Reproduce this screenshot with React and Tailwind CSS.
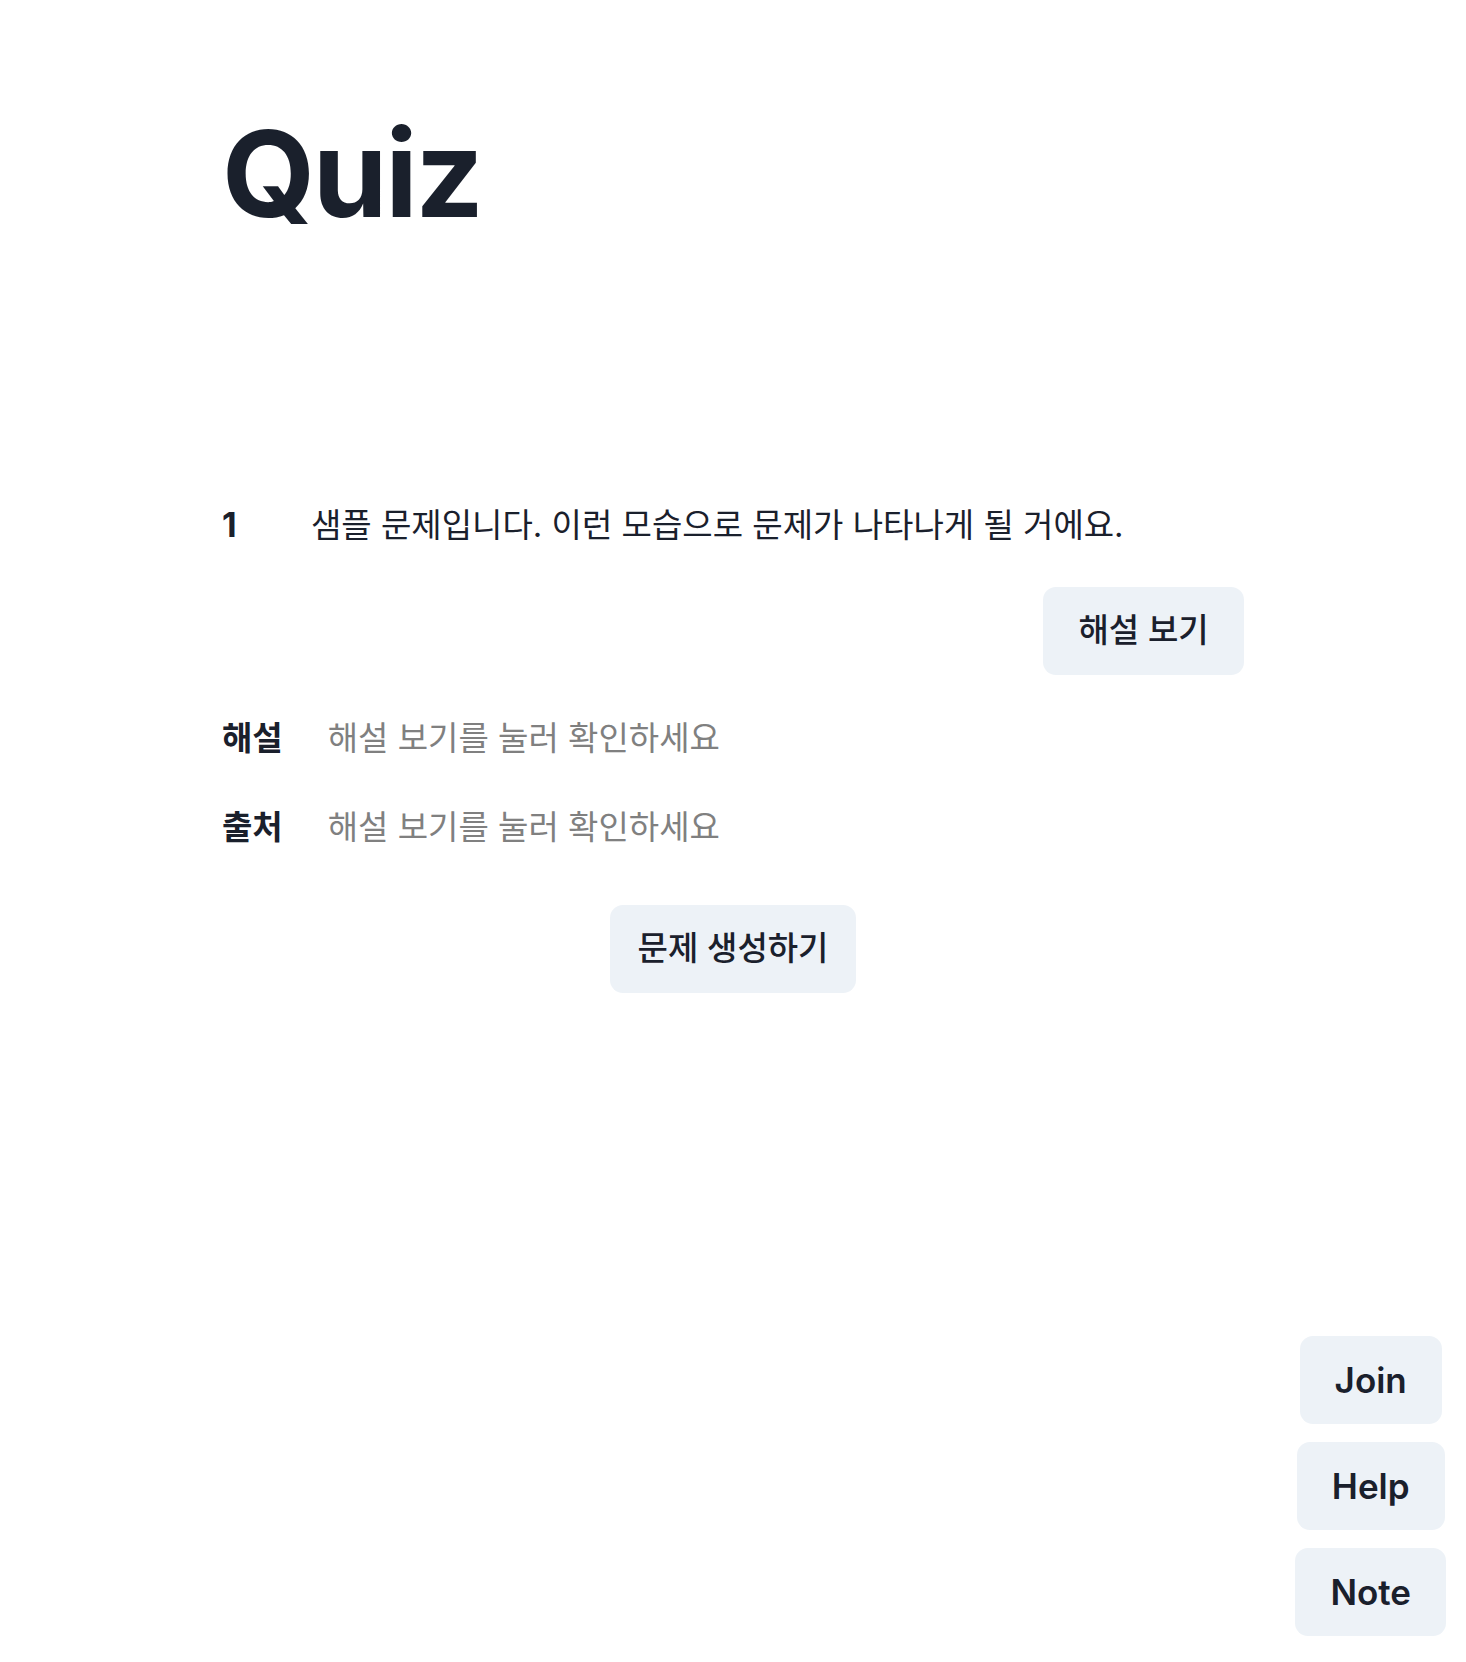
const font = { fontFamily: '"Inter", "Noto Sans CJK KR", sans-serif' };

const SideButton = ({ label }) => (
    <button className="h-[88px] px-[35px] rounded-[13px] bg-[#EDF2F7] text-[#1A202C] text-[35px] font-semibold leading-none">
        {label}
    </button>
);

const App = () => {
    return (
        <div className="min-h-screen bg-white text-[#1A202C]" style={font}>
            <div className="w-[1022px] mx-auto pt-[102px]">
                {/* Title */}
                <h1 className="text-[120px] font-bold leading-[1.2] tracking-[-0.02em]">Quiz</h1>

                {/* Question */}
                <div className="mt-[255px] flex items-center leading-[48px]">
                    <span className="w-[89px] shrink-0 text-[34px] font-bold">1</span>
                    <p className="text-[33px]">샘플 문제입니다. 이런 모습으로 문제가 나타나게 될 거에요.</p>
                </div>

                <div className="mt-[38px] flex justify-end">
                    <button className="w-[201px] h-[88px] rounded-[13px] bg-[#EDF2F7] text-[33px] font-medium">
                        해설 보기
                    </button>
                </div>

                {/* Explanation / Source */}
                <div className="mt-[39px] flex flex-col gap-[41px]">
                    <div className="flex items-center gap-[45px] leading-[48px] text-[33px]">
                        <span className="font-bold">해설</span>
                        <span className="text-[#808080]">해설 보기를 눌러 확인하세요</span>
                    </div>
                    <div className="flex items-center gap-[45px] leading-[48px] text-[33px]">
                        <span className="font-bold">출처</span>
                        <span className="text-[#808080]">해설 보기를 눌러 확인하세요</span>
                    </div>
                </div>

                <div className="mt-[54px] flex justify-center">
                    <button className="w-[246px] h-[88px] rounded-[13px] bg-[#EDF2F7] text-[33px] font-medium">
                        문제 생성하기
                    </button>
                </div>
            </div>

            {/* Floating buttons */}
            <div className="fixed right-[20px] bottom-[26px] flex flex-col items-center gap-[18px]">
                <SideButton label="Join" />
                <SideButton label="Help" />
                <SideButton label="Note" />
            </div>
        </div>
    );
};

export default App;
